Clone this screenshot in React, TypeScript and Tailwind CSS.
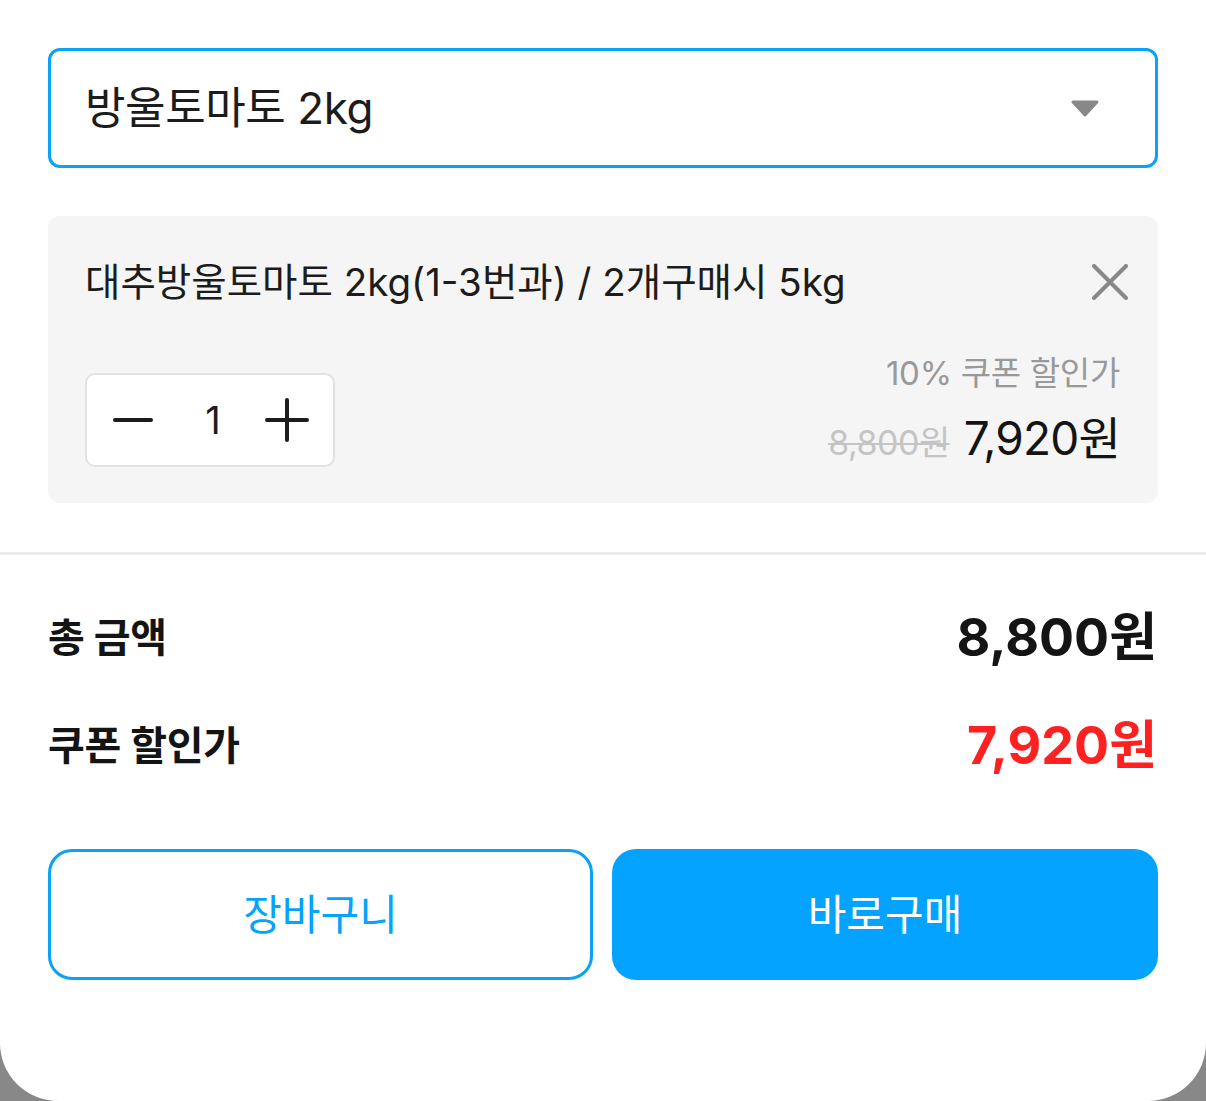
import React from "react";

const font = { fontFamily: 'Inter, "Noto Sans CJK KR", "Noto Sans", sans-serif' };

export default function App() {
  return (
    <div className="w-full h-[1101px] bg-[#888888]" style={font}>
      <div className="h-full bg-white rounded-b-[58px] flex flex-col">
        <div className="px-[48px] pt-[48px]">
          {/* select */}
          <div className="h-[120px] border-[3px] border-[#0aa2f5] rounded-[12px] flex items-center justify-between pl-[34px] pr-[55px]">
            <span className="text-[44px] leading-[50px] text-[#1c1c1c] tracking-[-0.4px]">방울토마토 2kg</span>
            <svg width="30" height="17" viewBox="0 0 30 17">
              <path d="M3 2 H27 L15 15 Z" fill="#888888" stroke="#888888" strokeWidth="3" strokeLinejoin="round" />
            </svg>
          </div>

          {/* option card */}
          <div className="mt-[48px] h-[287px] bg-[#f5f5f5] rounded-[12px] pl-[37px] pr-[30px] pt-[44px] flex flex-col">
            <div className="flex items-center justify-between h-[44px]">
              <span className="text-[38.5px] leading-[44px] text-[#1c1c1c] tracking-[0px]">
                대추방울토마토 2kg(1-3번과) / 2개구매시 5kg
              </span>
              <svg width="36" height="36" viewBox="0 0 36 36">
                <path d="M2 2 L34 34 M34 2 L2 34" stroke="#888888" strokeWidth="4" strokeLinecap="round" />
              </svg>
            </div>
            <div className="flex items-end justify-between mt-[49px] pr-[8px]">
              <div className="w-[250px] h-[94px] bg-white border-2 border-[#e2e2e2] rounded-[10px] flex items-center justify-between pl-[26px] pr-[24px]">
                <svg width="40" height="6" viewBox="0 0 40 6">
                  <path d="M2 3 H38" stroke="#1c1c1c" strokeWidth="4" strokeLinecap="round" />
                </svg>
                <span className="text-[38px] leading-[44px] text-[#1c1c1c] ml-[8px]">1</span>
                <svg width="44" height="44" viewBox="0 0 44 44">
                  <path d="M2 22 H42 M22 2 V42" stroke="#1c1c1c" strokeWidth="4" strokeLinecap="round" />
                </svg>
              </div>
              <div className="flex flex-col items-end gap-[20px] mb-[4px]">
                <span className="text-[33px] leading-[40px] text-[#999999] tracking-[-0.3px]">10% 쿠폰 할인가</span>
                <div className="flex items-baseline gap-[14px] h-[50px]">
                  <span className="text-[34px] leading-[50px] text-[#c4c4c4] line-through decoration-2 tracking-[-0.5px]">8,800원</span>
                  <span className="text-[46px] leading-[50px] text-[#141414] tracking-[-0.8px]">7,920원</span>
                </div>
              </div>
            </div>
          </div>
        </div>

        {/* divider */}
        <div className="mt-[49px] h-[3px] bg-[#ececec]" />

        {/* totals */}
        <div className="pt-[53px] pl-[48px] pr-[49px] flex flex-col gap-[48px]">
          <div className="flex items-center justify-between h-[60px]">
            <span className="text-[40px] font-bold text-[#141414] tracking-[-0.3px]">총 금액</span>
            <span className="text-[52px] font-bold text-[#141414] tracking-[0px]">8,800원</span>
          </div>
          <div className="flex items-center justify-between h-[60px]">
            <span className="text-[40px] font-bold text-[#141414] tracking-[-0.3px]">쿠폰 할인가</span>
            <span className="text-[52px] font-bold text-[#ff2121] tracking-[0px]">7,920원</span>
          </div>
        </div>

        {/* buttons */}
        <div className="mt-[73px] px-[48px] flex justify-between">
          <button className="w-[545px] h-[131px] border-[3px] border-[#0aa2f5] rounded-[24px] bg-white flex items-center justify-center">
            <span className="text-[42px] leading-[50px] text-[#05a3ff]">장바구니</span>
          </button>
          <button className="w-[546px] h-[131px] rounded-[24px] bg-[#03a3ff] flex items-center justify-center">
            <span className="text-[42px] leading-[50px] text-white">바로구매</span>
          </button>
        </div>
      </div>
    </div>
  );
}
